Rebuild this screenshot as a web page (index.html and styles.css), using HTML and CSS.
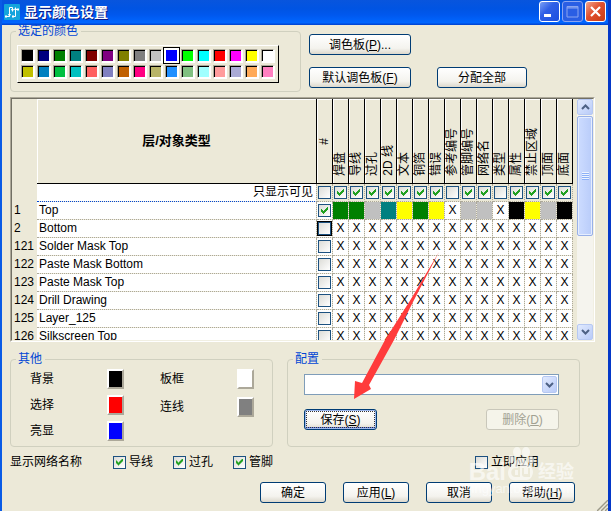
FILE: index.html
```html
<!DOCTYPE html>
<html lang="zh-CN">
<head>
<meta charset="utf-8">
<meta name="viewport" content="width=device-width, initial-scale=1">
<title>显示颜色设置</title>
<link rel="stylesheet" href="styles.css">
</head>
<body>
<div class="window">
  <header class="titlebar">
    <svg class="app-icon" viewBox="0 0 16 16" aria-hidden="true">
      <rect width="16" height="16" rx="1" fill="#14a4dc"/>
      <path d="M2 12.500H5.500V3.500H8.500V6M9 12.500H11.500V5.500H14" fill="none" stroke="#fff"/>
      <path d="M1 11.500h2v2H1zM7 5h3l-1.500 3zM8 11.500h2v2H8zM10 6h3l-1.500-3zM13 4.500h2v2h-2zM4 10h3l-1.500 3z" fill="#fff"/>
    </svg>
    <h1 class="title">显示颜色设置</h1>
    <div class="window-buttons">
      <button class="win-btn" type="button" aria-label="最小化"><svg viewBox="0 0 19 19"><path d="M4 12h7v3H4z" fill="#fff"/></svg></button>
      <button class="win-btn win-btn-max" type="button" aria-label="最大化" disabled><svg viewBox="0 0 19 19"><path d="M4 5h11M4 4.500h11V15H4zM4 6h11" fill="none" stroke="#8aa4f0"/></svg></button>
      <button class="win-btn win-btn-close" type="button" aria-label="关闭"><svg viewBox="0 0 19 19"><path d="M5 5l9 9M14 5l-9 9" stroke="#fff" stroke-width="2.200"/></svg></button>
    </div>
  </header>

  <main class="content">
    <div class="top">
      <fieldset class="group">
        <legend>选定的颜色</legend>
        <div class="palette" id="palette"></div>
      </fieldset>
      <div class="top-buttons">
        <button class="btn" type="button">调色板(<u>P</u>)...</button>
        <button class="btn btn-default-palette" type="button">默认调色板(<u>F</u>)</button>
        <button class="btn" type="button">分配全部</button>
      </div>
    </div>

    <section class="panel">
      <div class="panel-inner">
        <div class="table-view">
          <table class="layers">
            <colgroup id="cols"><col class="col-num"><col></colgroup>
            <thead>
              <tr id="head"><td class="num"></td><th class="name-head" scope="col">层/对象类型</th></tr>
            </thead>
            <tbody id="rows"></tbody>
          </table>
        </div>
        <div class="scrollbar">
          <button class="scroll-btn" type="button" aria-label="向上滚动"><svg viewBox="0 0 9 6"><path d="M1 5l3.500-3.500L8 5" fill="none" stroke="#4d6185" stroke-width="2"/></svg></button>
          <div class="thumb"><span class="thumb-grip"></span></div>
          <button class="scroll-btn scroll-down" type="button" aria-label="向下滚动"><svg viewBox="0 0 9 6"><path d="M1 1l3.500 3.500L8 1" fill="none" stroke="#4d6185" stroke-width="2"/></svg></button>
        </div>
      </div>
    </section>

    <div class="groups">
      <fieldset class="group">
        <legend>其他</legend>
        <div class="misc">
          <div class="misc-col">
            <div class="misc-item"><span>背景</span><button class="swatch swatch-black" type="button" aria-label="背景"></button></div>
            <div class="misc-item"><span>选择</span><button class="swatch swatch-red" type="button" aria-label="选择"></button></div>
            <div class="misc-item"><span>亮显</span><button class="swatch swatch-blue" type="button" aria-label="亮显"></button></div>
          </div>
          <div class="misc-col misc-col-loose">
            <div class="misc-item"><span>板框</span><button class="swatch swatch-white" type="button" aria-label="板框"></button></div>
            <div class="misc-item"><span>连线</span><button class="swatch swatch-gray" type="button" aria-label="连线"></button></div>
          </div>
        </div>
      </fieldset>
      <fieldset class="group group-config">
        <legend>配置</legend>
        <div class="config">
          <div class="combo">
            <select aria-label="配置"><option></option></select>
            <span class="combo-arrow"><svg viewBox="0 0 9 6"><path d="M1 1l3.500 3.500L8 1" fill="none" stroke="#4d6185" stroke-width="2"/></svg></span>
          </div>
          <div class="config-buttons">
            <button class="btn btn-focus" type="button">保存(<u>S</u>)</button>
            <button class="btn" type="button" disabled>删除(<u>D</u>)</button>
          </div>
        </div>
      </fieldset>
    </div>

    <div class="options">
      <span class="options-title">显示网络名称</span>
      <label class="check-label"><input type="checkbox" checked>导线</label>
      <label class="check-label"><input type="checkbox" checked>过孔</label>
      <label class="check-label"><input type="checkbox" checked>管脚</label>
      <label class="check-label apply-now"><input type="checkbox">立即应用</label>
    </div>

    <div class="actions">
      <button class="btn" type="button">确定</button>
      <button class="btn" type="button">应用(<u>L</u>)</button>
      <button class="btn" type="button">取消</button>
      <button class="btn" type="button">帮助(<u>H</u>)</button>
    </div>
  </main>

  <svg class="resize-grip" viewBox="0 0 12 12" aria-hidden="true">
    <path d="M0 12L12 0M4 12L12 4M8 12L12 8" stroke="#fff"/>
    <path d="M1 12L12 1M5 12L12 5M9 12L12 9" stroke="#9d9a86" stroke-width="1.500"/>
  </svg>

  <svg class="arrow" viewBox="0 0 86 148" aria-hidden="true">
    <path d="M85 0L60 48 40 88 15 133 17 137 0 147 1 129 8 131 31 88 57 47z" fill="#ff3b3b"/>
  </svg>

  <div class="watermark">
    <div class="mark-line">
      <span>Bai</span>
      <span class="paw">
        <svg viewBox="0 0 27 34" aria-hidden="true">
          <ellipse cx="4" cy="12" rx="3" ry="4"/><ellipse cx="10" cy="5" rx="4" ry="5"/>
          <ellipse cx="19" cy="5" rx="4" ry="5"/><ellipse cx="24" cy="13" rx="3" ry="4"/>
          <path fill-rule="evenodd" d="M14 11c4 0 5 4 8 7 4 3 5 7 3 11-2 5-7 4-11 4S5 35 2 30c-2-4-1-8 3-12 3-3 5-7 9-7zM11 17h2v13H8c-5 0-5-9 0-9h3zM8 23v5h3v-5zM15 21h2v6h4v-6h2v9h-5q-3 0-3-3z"/>
        </svg>
      </span>
      <span class="mark-cjk">经验</span>
    </div>
    <div class="mark-url">jingyan.baidu.com</div>
  </div>
</div>
<script src="app.js"></script>
</body>
</html>
```
FILE: styles.css
```css
* { box-sizing: border-box; }

body {
  margin: 0;
  background: #ece9d8;
  color: #000;
  font: 12px/16px "Liberation Sans", "Noto Sans CJK SC", sans-serif;
}

button, select, input { margin: 0; padding: 0; font: inherit; color: inherit; }

.window {
  position: relative;
  min-height: 100vh;
  border-left: 2px solid #0a5be6;
  border-right: 3px solid #0438c8;
  overflow: hidden;
}

/* Title bar */
.titlebar {
  display: flex;
  align-items: center;
  height: 25px;
  margin: 0 -3px 0 -2px;
  padding: 0 5px 2px 4px;
  background: linear-gradient(#0855dd, #0054e3 35%, #0058ee 60%, #0066ff 90%, #0040cc);
}
.app-icon { width: 16px; height: 16px; margin-right: 4px; }
.title {
  margin: 0;
  color: #fff;
  font-size: 14px;
  line-height: 20px;
  font-weight: bold;
  text-shadow: 1px 1px 0 #0a1883;
}
.window-buttons { display: flex; gap: 2px; margin-left: auto; }
.win-btn {
  width: 21px;
  height: 21px;
  border: 1px solid #fff;
  border-radius: 3px;
  background: linear-gradient(135deg, #7a9ff5, #2f5fe6 40%, #1b4fe0);
}
.win-btn svg { display: block; width: 19px; height: 19px; }
.win-btn-max { border-color: #8aa4f0; background: #2a5ee4; }
.win-btn-close { background: linear-gradient(135deg, #f0a48c, #e1502f 45%, #c83c14); }

.content { padding: 0 13px 8px 8px; }

/* Group boxes */
.group {
  min-width: 0;
  margin: 0;
  padding: 0;
  border: 1px solid #d0d0bf;
  border-radius: 4px;
}
.group legend {
  margin-left: 5px;
  padding: 0 3px 0 2px;
  color: #0046d5;
  line-height: 13px;
}

.top { display: flex; gap: 8px; }
.top-buttons {
  display: grid;
  grid-template-columns: 102px 90px;
  align-content: start;
  gap: 12px 26px;
  padding-top: 9px;
}
.btn-default-palette { grid-column: 1; }

.palette {
  display: grid;
  grid-template-columns: repeat(16, 13px);
  gap: 3px;
  margin: 7px 21px 8px 6px;
  padding: 3px 4px 4px 3px;
  border: 1px solid;
  border-color: #fff #000 #000 #fff;
}
.palette-cell {
  height: 13px;
  border: 1px solid;
  border-color: #aca899 #fff #fff #aca899;
  background: var(--color);
  box-shadow: inset 1px 1px 0 #000, 1px 1px 0 #fff;
}
.palette-cell.selected {
  border-color: #fff;
  box-shadow: 0 0 0 1px #fff, 0 0 0 2px #000;
}

/* Buttons */
.btn {
  height: 21px;
  border: 1px solid #003c74;
  border-radius: 3px;
  background: linear-gradient(#fff, #f4f3ee 70%, #dcd8cc);
  line-height: 18px;
  white-space: nowrap;
}
.btn:disabled { border-color: #c9c7ba; background: #f5f4ea; color: #a1a192; }
.btn-focus {
  outline: 1px dotted #333;
  outline-offset: -3px;
  box-shadow: inset 0 0 0 1px #9db8ee, inset 0 -2px 0 #6982ee;
}

/* Check boxes */
input[type="checkbox"] {
  appearance: none;
  display: block;
  flex: none;
  width: 13px;
  height: 13px;
  border: 1px solid #1c5180;
  background: linear-gradient(135deg, #dcdcd7, #fff);
}
input[type="checkbox"]:checked::before {
  content: "";
  display: block;
  width: 7px;
  height: 7px;
  margin: 2px;
  background: #21a121;
  clip-path: polygon(0 2px, 1px 2px, 1px 3px, 2px 3px, 2px 4px, 3px 4px, 3px 3px, 4px 3px, 4px 2px, 5px 2px, 5px 1px, 6px 1px, 6px 0, 7px 0, 7px 3px, 6px 3px, 6px 4px, 5px 4px, 5px 5px, 4px 5px, 4px 6px, 3px 6px, 3px 7px, 2px 7px, 2px 6px, 1px 6px, 1px 5px, 0 5px);
}

/* Layer table */
.panel {
  margin-top: 5px;
  border: 1px solid;
  border-color: #aca899 #fff #fff #aca899;
}
.panel-inner {
  display: flex;
  gap: 4px;
  height: 243px;
  border: 1px solid;
  border-color: #716f64 #f1efe2 #f1efe2 #716f64;
}
.table-view { flex: 1; min-width: 0; overflow: hidden; }
.layers {
  width: 100%;
  table-layout: fixed;
  border-collapse: separate;
  border-spacing: 0;
}
.layers td, .layers th { padding: 0; font-weight: normal; }
.col-num { width: 25px; }
.col-cell { width: 16px; }
.layers thead th {
  height: 85px;
  border-right: 1px solid #000;
  border-bottom: 1px solid #000;
  box-shadow: inset 1px 1px 0 #fff;
}
.layers thead .name-head { font-size: 13px; font-weight: bold; }
.layers thead .object-head { vertical-align: bottom; }
.layers thead span {
  display: block;
  margin: 0 auto;
  line-height: 15px;
  writing-mode: vertical-rl;
  text-orientation: sideways;
  transform: rotate(180deg);
  white-space: nowrap;
}
.layers .object-head span { margin-bottom: 7px; }
.layers tbody td, .layers tbody th {
  height: 18px;
  border-right: 1px dotted #aca899;
  border-bottom: 1px dotted #aca899;
  background-color: #fff;
  background-clip: padding-box;
  line-height: 17px;
  text-align: center;
  white-space: nowrap;
}
.layers tbody .num {
  padding-left: 2px;
  border-color: #ece9d8;
  background: #ece9d8;
  text-align: left;
}
.layers tbody .name { padding-left: 2px; text-align: left; }
.layers tbody .filter td { background-color: #ece9d8; }
.layers tbody .filter-name {
  padding-right: 3px;
  border-bottom-color: #0046d5;
  text-align: right;
}
.layers tbody .fill { background-color: var(--color); }
.layers input { margin: 0 1px; }
.layers input.current { outline: 1px solid #000; }

.scrollbar {
  display: flex;
  flex-direction: column;
  width: 16px;
  background: #f5f4ee;
}
.scroll-btn, .combo-arrow {
  display: flex;
  align-items: center;
  justify-content: center;
  border: 1px solid #b6c8f2;
  border-radius: 2px;
  background: linear-gradient(135deg, #e1eafe, #b9cbf8);
}
.scroll-btn { height: 16px; }
.scroll-btn svg, .combo-arrow svg { width: 9px; height: 6px; }
.scroll-down { margin-top: auto; }
.thumb {
  display: flex;
  align-items: center;
  justify-content: center;
  height: 120px;
  margin-top: 1px;
  border: 1px solid #98b0e8;
  border-radius: 2px;
  background: linear-gradient(90deg, #cddcff, #b9ccfa);
  box-shadow: inset 0 0 0 1px #e6eeff;
}
.thumb-grip {
  width: 7px;
  height: 8px;
  background: repeating-linear-gradient(#eef4fe 0 1px, #8cb0f8 1px 2px);
}

/* Lower groups */
.groups { display: flex; gap: 14px; margin: 11px 15px 0 0; }
.group-config { flex: 1; }
.misc { display: flex; gap: 36px; padding: 3px 18px 5px 19px; }
.misc-col { display: flex; flex-direction: column; gap: 6px; width: 94px; }
.misc-col-loose { gap: 8px; }
.misc-item { display: flex; justify-content: space-between; height: 20px; line-height: 20px; }
.swatch {
  width: 17px;
  height: 20px;
  border: 2px solid;
  border-color: #fff #aca899 #aca899 #fff;
}
.swatch-black { background: #000; }
.swatch-red { background: #f00; }
.swatch-blue { background: #00f; }
.swatch-white { background: #fff; }
.swatch-gray { background: #808080; }

.config { padding: 8px 20px 0 16px; }
.combo { position: relative; }
.combo select {
  appearance: none;
  display: block;
  width: 100%;
  height: 21px;
  border: 1px solid #7f9db9;
  border-radius: 0;
  background: #fff;
}
.combo-arrow {
  position: absolute;
  top: 2px;
  right: 2px;
  bottom: 2px;
  width: 15px;
  pointer-events: none;
}
.config-buttons { display: flex; justify-content: space-between; margin-top: 14px; }
.config-buttons .btn { width: 73px; }

.options { display: flex; align-items: center; gap: 20px; margin-top: 7px; }
.options-title { margin-right: 11px; }
.check-label { display: flex; align-items: center; gap: 3px; }
.apply-now { margin: 0 56px 0 auto; }

.actions { display: flex; justify-content: flex-end; gap: 17px; margin-top: 12px; padding-right: 20px; }
.actions .btn { width: 66px; }

.resize-grip { position: absolute; right: 0; bottom: 0; width: 12px; height: 12px; }

/* Overlays */
.arrow {
  position: absolute;
  top: 252px;
  left: 352px;
  width: 86px;
  height: 148px;
  pointer-events: none;
}
.watermark {
  position: absolute;
  right: 34px;
  bottom: 14px;
  color: #fff;
  opacity: 0.6;
  white-space: nowrap;
  pointer-events: none;
}
.mark-line {
  display: flex;
  align-items: flex-end;
  font-size: 24px;
  line-height: 18px;
  font-weight: bold;
}
.paw svg { display: block; width: 27px; height: 34px; margin: 0 4px 0 1px; fill: #fff; }
.mark-cjk { font-size: 18px; }
.mark-url { font-size: 13px; line-height: 16px; }
```
FILE: app.js
```js
const paletteColors = [
  "#000000", "#000080", "#008000", "#008080", "#800000", "#800080", "#808000", "#808080",
  "#c0c0c0", "#0000ff", "#00ff00", "#00ffff", "#ff0000", "#ff00ff", "#ffff00", "#ffffff",
  "#c0c000", "#0080c0", "#00c040", "#00c0c0", "#ff6060", "#8080c0", "#c06000", "#ff0080",
  "#b8b468", "#2090ff", "#80c080", "#a0ffff", "#ff9c9c", "#aaaad5", "#ffaa58", "#ff80c0"
];
const selectedColor = 9;

const objects = [
  { name: "焊盘", visible: true, top: "#008000" },
  { name: "导线", visible: true, top: "#008000" },
  { name: "过孔", visible: true, top: "#c0c0c0" },
  { name: "2D 线", visible: true, top: "#008080" },
  { name: "文本", visible: true, top: "#ffff00" },
  { name: "铜箔", visible: true, top: "#008000" },
  { name: "错误", visible: true, top: "#ffff00" },
  { name: "参考编号", visible: false, top: null },
  { name: "管脚编号", visible: true, top: "#c0c0c0" },
  { name: "网络名", visible: true, top: "#c0c0c0" },
  { name: "类型", visible: false, top: null },
  { name: "属性", visible: true, top: "#000000" },
  { name: "禁止区域", visible: true, top: "#ffff00" },
  { name: "顶面", visible: true, top: "#c0c0c0" },
  { name: "底面", visible: true, top: "#000000" }
];

const layers = [
  [1, "Top"], [2, "Bottom"], [121, "Solder Mask Top"], [122, "Paste Mask Bottom"],
  [123, "Paste Mask Top"], [124, "Drill Drawing"], [125, "Layer_125"], [126, "Silkscreen Top"]
];

const byId = (id) => document.getElementById(id);
const check = (label, on, cls = "") =>
  `<td><input type="checkbox" aria-label="${label}" class="${cls}"${on ? " checked" : ""}></td>`;

byId("palette").innerHTML = paletteColors.map((color, i) =>
  `<button type="button" class="palette-cell${i === selectedColor ? " selected" : ""}" style="--color:${color}" aria-label="${color}"></button>`
).join("");

byId("cols").insertAdjacentHTML("beforeend", '<col class="col-cell">'.repeat(objects.length + 1));

byId("head").insertAdjacentHTML("beforeend",
  '<th scope="col"><span>#</span></th>' +
  objects.map((o) => `<th class="object-head" scope="col"><span>${o.name}</span></th>`).join(""));

const filterRow = '<tr class="filter"><td class="num"></td><th class="filter-name" scope="row">只显示可见</th>' +
  check("全部", false) + objects.map((o) => check(o.name, o.visible)).join("") + "</tr>";

const layerRows = layers.map(([num, name], row) => {
  const cells = objects.map((o) => row === 0 && o.top
    ? `<td class="fill" style="--color:${o.top}"></td>`
    : "<td>X</td>").join("");
  return `<tr><td class="num">${num}</td><th class="name" scope="row">${name}</th>` +
    check(name, row === 0, row === 1 ? "current" : "") + cells + "</tr>";
}).join("");

byId("rows").innerHTML = filterRow + layerRows;
```
